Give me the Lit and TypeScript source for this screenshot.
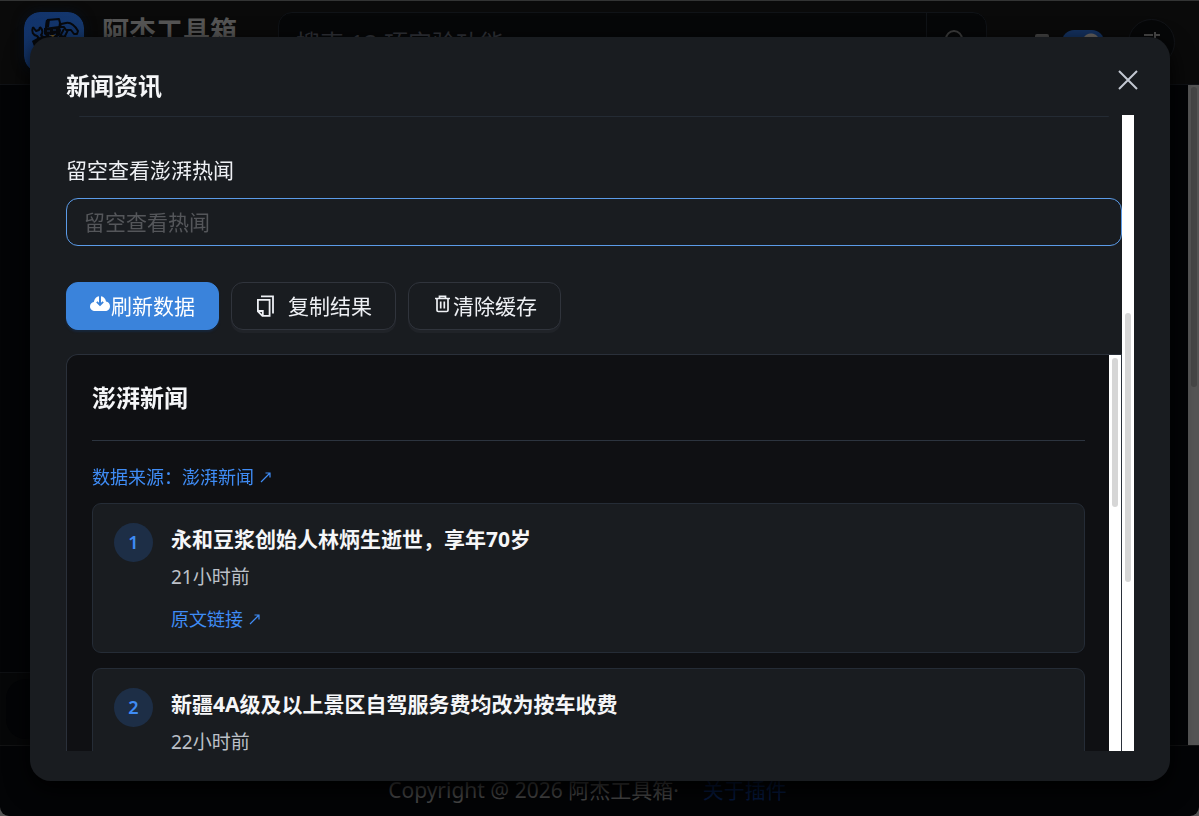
import { LitElement, html, css, svg } from "lit";
import { customElement, property } from "lit/decorators.js";

interface NewsItem {
  title: string;
  time: string;
}

const NEWS: NewsItem[] = [
  { title: "永和豆浆创始人林炳生逝世，享年70岁", time: "21小时前" },
  { title: "新疆4A级及以上景区自驾服务费均改为按车收费", time: "22小时前" },
];

const fontStack = css`"Noto Sans", "Noto Sans CJK SC", sans-serif`;

/* Vertical scroll indicator: a track with a thumb placed by proportion. */
@customElement("scroll-track")
class ScrollTrack extends LitElement {
  @property({ type: Number }) before = 0;
  @property({ type: Number }) size = 1;
  @property({ type: Number }) after = 0;

  static styles = css`
    :host {
      display: grid;
      justify-items: center;
      flex: none;
      width: 12px;
      background: var(--track, #ffffff);
    }
    .thumb {
      grid-row: 2;
      width: 6px;
      border-radius: 3px;
      background: var(--thumb, #d6d6d6);
    }
  `;

  render() {
    return html`<style>
        :host {
          grid-template-rows: ${this.before}fr ${this.size}fr ${this.after}fr;
        }
      </style>
      <div class="thumb"></div>`;
  }
}

/* Dimmed page behind the dialog. */
@customElement("toolbox-page")
class ToolboxPage extends LitElement {
  static styles = css`
    :host {
      display: flex;
      flex-direction: column;
      height: 100vh;
      box-sizing: border-box;
      border-top: 1px solid #333434;
      border-radius: 0 0 9px 9px;
      overflow: hidden;
      background: #030406;
      color: #565656;
      font-family: ${fontStack};
      font-size: 21px;
    }
    header {
      display: flex;
      align-items: flex-start;
      box-sizing: border-box;
      height: 84px;
      flex: none;
      padding: 11px 24px 0;
      background: #0a0a0a;
      border-bottom: 1px solid #101216;
    }
    .logo {
      flex: none;
      width: 60px;
      height: 60px;
      border-radius: 16px;
      box-shadow: 0 0 12px #07101d;
    }
    h1 {
      margin: 0 41px 0 18px;
      flex: none;
      font-size: 27px;
      line-height: 38px;
      font-weight: 700;
    }
    .search {
      display: flex;
      flex: 1;
      min-width: 0;
      box-sizing: border-box;
      height: 60px;
      border: 1px solid #101317;
      border-radius: 14px;
      background: #060708;
      overflow: hidden;
    }
    .search input {
      flex: 1;
      min-width: 0;
      border: 0;
      padding: 0 17px;
      background: none;
      color: #565656;
      font: inherit;
      font-size: 24px;
      outline: none;
    }
    .search input::placeholder {
      color: #303238;
      opacity: 1;
    }
    .go {
      width: 60px;
      padding: 0 4px 0 0;
      border: 0;
      border-left: 1px solid #101317;
      background: none;
    }
    .theme {
      display: flex;
      align-items: center;
      gap: 12px;
      height: 60px;
      margin: 0 24px 0 47px;
    }
    .theme input {
      appearance: none;
      margin: 0;
      width: 42px;
      height: 24px;
      border-radius: 12px;
      background: radial-gradient(circle at 29px 12px, #6a6662 8px, transparent 9px) #143260;
    }
    .settings {
      width: 47px;
      height: 47px;
      margin-top: 7px;
      padding: 0;
      border: 1px solid #121418;
      border-radius: 50%;
      background: #060708;
    }
    main {
      display: flex;
      flex: 1;
      min-height: 0;
    }
    .workspace {
      display: flex;
      flex-direction: column;
      justify-content: flex-end;
      flex: 1;
    }
    .dock {
      margin-right: 24px;
      padding: 6px;
      background: #060708;
      border-top: 1px solid #0e1013;
    }
    .slot {
      height: 60px;
      border-radius: 20px;
      background: #030406;
    }
    scroll-track {
      width: 11px;
      --track: #555555;
      --thumb: #464646;
    }
    footer {
      display: flex;
      justify-content: center;
      gap: 24px;
      box-sizing: border-box;
      height: 71px;
      flex: none;
      padding: 28px 24px 0 0;
      line-height: 32px;
      border-top: 1px solid #121314;
      color: #4a4a4a;
    }
    a {
      color: #06193f;
      text-decoration: none;
    }
  `;

  render() {
    return html`
      <header>
        <svg class="logo" viewBox="0 0 60 60" aria-hidden="true">
          <defs>
            <linearGradient id="g" x1="0" y1="0" x2="1" y2="1">
              <stop offset="0" stop-color="#12336b" />
              <stop offset="1" stop-color="#163b70" />
            </linearGradient>
          </defs>
          <rect width="60" height="60" rx="16" fill="url(#g)" />
          <g fill="none" stroke="#07090d" stroke-linejoin="round">
            <path stroke-width="2" d="M23 8l12-1 1 4-1 6M23 8l-1 9" />
            <path stroke-width="2" d="M9 15c-2 5 0 8 4 9l5 6M16 15c3 3 3 6 1 8l5 5M9 15l3 4 3-1 1-3" />
            <path stroke-width="2" d="M37 12l5-1c5-1 9 3 12 8l-1 3-3 0-3-4-5 0-2-3-4 0z" />
            <path stroke-width="2" d="M44 18l-6 12M40 17l-6 11" />
          </g>
          <g fill="#07090d">
            <path d="M20 16l15-2 2 4-1 5-4 3-8 0-4-4z" />
            <path d="M22 8l4-1-1 8-4 1z" />
            <path d="M17 24l6 0 4 4 6-1 4-4 5 1 3 8v20H12V32z" />
            <path d="M8 29l7-4 4 6-8 6z" />
          </g>
          <g fill="none" stroke="#1a3868" stroke-width="1">
            <path d="M23 19h3M29 18h3M25 23l3 1 4-2M19 27l4 4M37 26l4 4M21 31l-4 5" />
          </g>
          <path d="M26 23h5l-2 2z" fill="#705522" />
        </svg>
        <h1>阿杰工具箱</h1>
        <div class="search">
          <input type="search" aria-label="搜索" placeholder="搜索 12 项实验功能" />
          <button class="go" aria-label="搜索">
            <svg width="26" height="26" viewBox="0 0 26 26" fill="none" stroke="#3c3c3c" stroke-width="2">
              <circle cx="12" cy="11" r="8" />
              <path d="M18 17l6 6" />
            </svg>
          </button>
        </div>
        <label class="theme">
          <svg width="16" height="16" viewBox="0 0 16 16" fill="#444444" aria-hidden="true">
            <path d="M3 0h10a2 2 0 0 1 2 2v12a2 2 0 0 1-2 2H3a2 2 0 0 1-2-2V2a2 2 0 0 1 2-2z" />
          </svg>
          <input type="checkbox" checked aria-label="主题" />
        </label>
        <button class="settings" aria-label="设置">
          <svg width="18" height="18" viewBox="0 0 18 18" fill="none" stroke="#4a4a4a" stroke-width="2">
            <path d="M1 3h9M12 0v6M12 3h5M1 9h4M7 6v6M7 9h10M1 15h9M12 12v6M12 15h5" />
          </svg>
        </button>
      </header>
      <main>
        <div class="workspace">
          <div class="dock"><div class="slot"></div></div>
        </div>
        <scroll-track .before=${2} .size=${300} .after=${358}></scroll-track>
      </main>
      <footer>
        <span>Copyright @ 2026 阿杰工具箱·</span>
        <a href="#about">关于插件</a>
      </footer>
    `;
  }
}

const cloudIcon = svg`
  <path fill="#ffffff" d="M5.200 18C2.200 18 0 16 0 13.400c0-2.300 1.600-4 3.800-4.400C4.400 5.700 6.500 3.700 9 3.300V9.800L7.400 8.200 6.200 9.400 10 13.200l3.800-3.800-1.200-1.200L11 9.800V3.300c2.600.4 4.600 2.400 5 5.200 2.300.3 4 2.200 4 4.700 0 2.700-2.100 4.800-4.800 4.800z"/>`;

const trashIcon = svg`
  <g fill="none" stroke="#eef0f4" stroke-width="1.700">
    <path d="M2 5.500h15M6.500 5V3.300h6V5M4 5.500v11.700c0 .8.500 1.300 1.300 1.300h8.400c.8 0 1.300-.5 1.300-1.300V5.500M7.700 8.500v7M11.300 8.500v7"/>
  </g>`;

@customElement("news-panel")
class NewsPanel extends LitElement {
  @property({ attribute: false }) items: NewsItem[] = [];

  static styles = css`
    :host {
      display: flex;
      min-height: 0;
      border: 1px solid #2a303a;
      border-bottom: 0;
      border-radius: 12px 0 0 0;
      background: #0f1013;
    }
    .content {
      flex: 1;
      min-width: 0;
      padding: 25px 24px 0 25px;
      overflow: auto;
      scrollbar-width: none;
    }
    h3 {
      margin: 0 0 22px;
      padding-bottom: 24px;
      border-bottom: 1px solid #2c343f;
      font-size: 24px;
      line-height: 36px;
      font-weight: 700;
      color: #f5f6f8;
    }
    a {
      display: flex;
      align-items: center;
      gap: 6px;
      width: max-content;
      font-size: 18px;
      line-height: 28px;
      color: #3f8cf5;
      text-decoration: none;
    }
    .list {
      display: flex;
      flex-direction: column;
      gap: 15px;
      margin: 12px 0 0;
      padding: 0;
      list-style: none;
    }
    .item {
      display: flex;
      gap: 18px;
      padding: 19px 21px;
      border: 1px solid #252c36;
      border-radius: 9px;
      background: #191c20;
    }
    .rank {
      flex: none;
      width: 39px;
      height: 39px;
      border-radius: 50%;
      background: #1d2e46;
      color: #3f8cf5;
      font-size: 18px;
      line-height: 39px;
      font-weight: 600;
      text-align: center;
    }
    .text {
      min-width: 0;
    }
    h4 {
      margin: 0 0 8px;
      font-size: 21px;
      line-height: 32px;
      font-weight: 700;
      color: #f5f6f8;
    }
    time {
      display: block;
      margin-bottom: 14px;
      font-size: 19px;
      line-height: 28px;
      color: #bcc0c8;
    }
  `;

  private arrow = () => html`<svg width="12" height="12" viewBox="0 0 12 12" fill="none" stroke="#3f8cf5" stroke-width="1.200" aria-hidden="true">
    <path d="M1 11L10 2M5.500 2H10v4.500" />
  </svg>`;

  render() {
    return html`
      <div class="content">
        <h3>澎湃新闻</h3>
        <a href="#source">数据来源：澎湃新闻${this.arrow()}</a>
        <ol class="list">
          ${this.items.map(
            (item, i) => html`<li class="item">
              <div class="rank">${i + 1}</div>
              <div class="text">
                <h4>${item.title}</h4>
                <time>${item.time}</time>
                <a href="#article">原文链接${this.arrow()}</a>
              </div>
            </li>`
          )}
        </ol>
      </div>
      <scroll-track .before=${3} .size=${149} .after=${244}></scroll-track>
    `;
  }
}

@customElement("app-root")
class AppRoot extends LitElement {
  static styles = css`
    :host {
      display: block;
      height: 100vh;
      background: #555555;
      font-family: ${fontStack};
      font-size: 21px;
      color: #eef0f4;
    }
    .overlay {
      position: fixed;
      inset: 0;
      display: flex;
      padding: 37px 29px 35px 30px;
    }
    .dialog {
      display: flex;
      flex-direction: column;
      flex: 1;
      min-width: 0;
      padding-bottom: 30px;
      border-radius: 21px;
      background: #191c20;
      box-shadow: 0 8px 24px #000000;
    }
    .head {
      display: flex;
      align-items: flex-start;
      justify-content: space-between;
      box-sizing: border-box;
      height: 78px;
      flex: none;
      padding: 23px 22px 0 36px;
    }
    h2 {
      margin: 8px 0 0;
      font-size: 24px;
      line-height: 36px;
      font-weight: 700;
      color: #f5f6f8;
    }
    .close {
      display: grid;
      place-items: center;
      width: 40px;
      height: 40px;
      padding: 0;
      border: 0;
      background: none;
    }
    .body {
      display: flex;
      flex: 1;
      min-height: 0;
      padding: 0 36px;
    }
    .form {
      display: flex;
      flex-direction: column;
      flex: 1;
      min-width: 0;
    }
    .rule {
      height: 1px;
      flex: none;
      margin: 0 13px;
      border-bottom: 1px solid #242b34;
      border-radius: 4px;
    }
    label {
      margin: 37px 0 12px;
      line-height: 32px;
    }
    .query {
      box-sizing: border-box;
      width: 100%;
      height: 48px;
      flex: none;
      padding: 0 17px;
      border: 1px solid #5b9be8;
      border-radius: 12px;
      background: #191c20;
      color: #eef0f4;
      font: inherit;
      outline: none;
    }
    .query::placeholder {
      color: #54565a;
      opacity: 1;
    }
    .actions {
      display: flex;
      gap: 12px;
      margin: 36px 0 24px;
    }
    .btn {
      display: flex;
      align-items: center;
      box-sizing: border-box;
      height: 48px;
      padding: 0 23px;
      border: 1px solid #30343c;
      border-radius: 12px;
      background: #191c20;
      box-shadow: 0 3px 0 #202328;
      color: #eef0f4;
      font: inherit;
      line-height: 32px;
      white-space: nowrap;
    }
    .btn.primary {
      border-color: #3a83db;
      background: #3a83db;
      box-shadow: 0 2px 2px #17263a;
      color: #ffffff;
    }
    .btn.spaced {
      gap: 14px;
    }
    news-panel {
      flex: 1;
    }
  `;

  render() {
    return html`
      <toolbox-page></toolbox-page>
      <div class="overlay">
        <section class="dialog" role="dialog" aria-labelledby="dialog-title">
          <div class="head">
            <h2 id="dialog-title">新闻资讯</h2>
            <button class="close" aria-label="关闭">
              <svg width="20" height="20" viewBox="0 0 20 20" fill="none" stroke="#c3c8d2" stroke-width="2">
                <path d="M1 1L19 19M19 1L1 19" />
              </svg>
            </button>
          </div>
          <div class="body">
            <div class="form">
              <div class="rule"></div>
              <label for="query">留空查看澎湃热闻</label>
              <input id="query" class="query" type="text" placeholder="留空查看热闻" />
              <div class="actions">
                <button class="btn primary">
                  <svg width="21" height="26" viewBox="0 0 21 26" aria-hidden="true">${cloudIcon}</svg>刷新数据
                </button>
                <button class="btn spaced">
                  <svg width="19" height="22" viewBox="-1 0 19 22" fill="none" stroke="#eef0f4" stroke-width="1.800" aria-hidden="true">
                    <path d="M1.900 4.900h11.700v16H6.400L1.900 16.400z" />
                    <path d="M2 16h4.800v4.800" />
                    <path d="M5 1.400h12v17" />
                  </svg>复制结果
                </button>
                <button class="btn">
                  <svg width="21" height="26" viewBox="-1 0 21 26" aria-hidden="true">${trashIcon}</svg>清除缓存
                </button>
              </div>
              <news-panel .items=${NEWS}></news-panel>
            </div>
            <scroll-track .before=${198} .size=${269} .after=${169}></scroll-track>
          </div>
        </section>
      </div>
    `;
  }
}
